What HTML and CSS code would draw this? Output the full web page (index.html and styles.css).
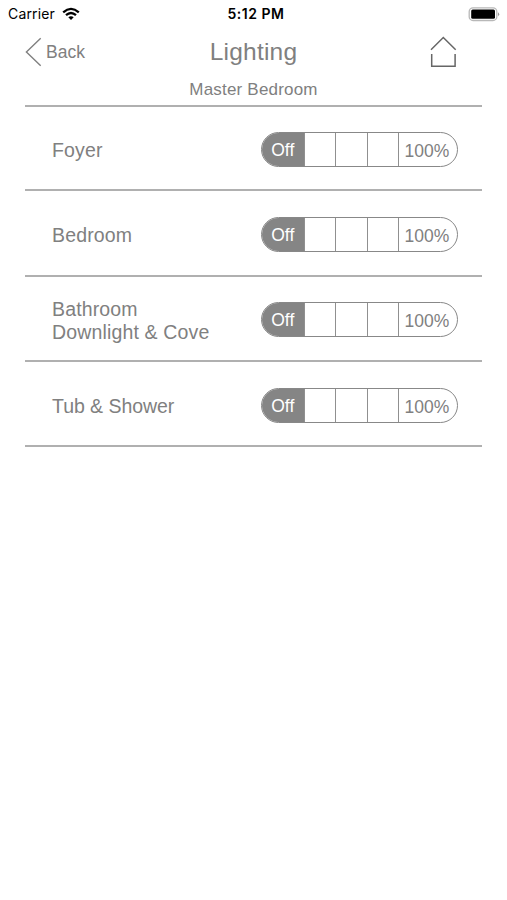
FILE: index.html
```
<!DOCTYPE html>
<html lang="en">
<head>
<meta charset="utf-8">
<title>Lighting</title>
<link rel="stylesheet" href="styles.css">
</head>
<body>
<header class="status">
  <div class="carrier"><span>Carrier</span>
    <svg class="wifi" width="18" height="14" viewBox="0 0 18 14" fill="none" stroke="#000" stroke-width="2.3"><path d="M1.2 5.3Q9-1.5 16.8 5.3M4 8.2Q9 3.8 14 8.2"/><path d="M6.3 10.3Q9 8 11.7 10.3L9 13Z" fill="#000" stroke="none"/></svg>
  </div>
  <time class="clock">5:12 PM</time>
  <svg class="battery" width="32" height="15" viewBox="0 0 32 15"><rect x="1.2" y=".9" width="27.6" height="12.6" rx="3.8" fill="#fff" stroke="#b8b8b8" stroke-width="1.3"/><rect x="3.2" y="2.6" width="23.8" height="9.2" rx="1.5"/><path d="M30 5.2Q32.4 7.2 30 9.2Z" fill="#999"/></svg>
</header>
<nav class="nav">
  <a class="back"><svg width="17" height="30" viewBox="0 0 17 30" fill="none" stroke="#808080" stroke-width="1.4"><path d="M15.7 1.2 1.4 15l14.3 13.8"/></svg><span>Back</span></a>
  <h1 class="title">Lighting</h1>
  <a class="home"><svg width="27" height="32" viewBox="0 0 27 32" fill="none" stroke="#666" stroke-width="1.5"><path d="M1 13.8 13.3 1.5 25.7 13.8M1.7 18v12.2h23.4V18"/></svg></a>
</nav>
<h2 class="room">Master Bedroom</h2>
<main class="list">
  <section class="row"><div class="label">Foyer</div><div class="dimmer"><b class="on">Off</b><b></b><b></b><b></b><b class="full">100%</b></div></section>
  <section class="row"><div class="label">Bedroom</div><div class="dimmer"><b class="on">Off</b><b></b><b></b><b></b><b class="full">100%</b></div></section>
  <section class="row"><div class="label">Bathroom<br>Downlight &amp; Cove</div><div class="dimmer"><b class="on">Off</b><b></b><b></b><b></b><b class="full">100%</b></div></section>
  <section class="row"><div class="label">Tub &amp; Shower</div><div class="dimmer"><b class="on">Off</b><b></b><b></b><b></b><b class="full">100%</b></div></section>
</main>
</body>
</html>
```
FILE: styles.css
```
* { box-sizing: border-box; }
body { margin: 0; width: 507px; height: 900px; background: #fff; color: #808080; font-family: "Liberation Sans", Arial, sans-serif; }
.status { display: grid; grid-template-columns: 1fr auto 1fr; align-items: center; height: 28px; padding: 0 7px 0 8px; color: #000; font: 400 14px/28px Inter, sans-serif; }
.carrier { display: flex; align-items: center; gap: 7px; }
.carrier span { letter-spacing: .15px; }
.clock { font-weight: 600; font-size: 14px; letter-spacing: .5px; padding-left: 4px; }
.battery { justify-self: end; }
.nav { display: grid; grid-template-columns: 1fr auto 1fr; align-items: center; height: 48px; padding: 0 50px; }
.back { display: flex; align-items: center; gap: 4px; margin-left: -25px; font-size: 17.5px; line-height: 30px; }
.title { margin: 0; font-size: 24.5px; font-weight: 400; line-height: 48px; letter-spacing: .2px; }
.home { display: flex; justify-self: end; }
.room { margin: 0; height: 28.6px; font-size: 17px; font-weight: 400; line-height: 27px; letter-spacing: .2px; text-align: center; }
.list { margin: 0 25px; border-top: 2px solid #b0b0b0; }
.row { display: flex; align-items: center; justify-content: space-between; height: 85.35px; padding: 3px 24px 0 27px; border-bottom: 2px solid #b0b0b0; }
.row:first-child { height: 84.6px; }
.label { padding-top: 2px; font-size: 19.5px; line-height: 22.5px; letter-spacing: .15px; }
.row:last-child .label { letter-spacing: -.05px; }
.dimmer { display: grid; grid-template-columns: 42.5px 31.5px 31.5px 31.5px 1fr; width: 197px; height: 35px; border: 1.3px solid #888; border-radius: 18px; overflow: hidden; font-size: 17.5px; line-height: 34px; }
.dimmer b { border-right: 1px solid #909090; font-weight: 400; text-align: center; }
.dimmer .on { background: #858585; color: #fff; }
.dimmer .full { border: 0; padding-right: 2px; line-height: 36px; }
```
